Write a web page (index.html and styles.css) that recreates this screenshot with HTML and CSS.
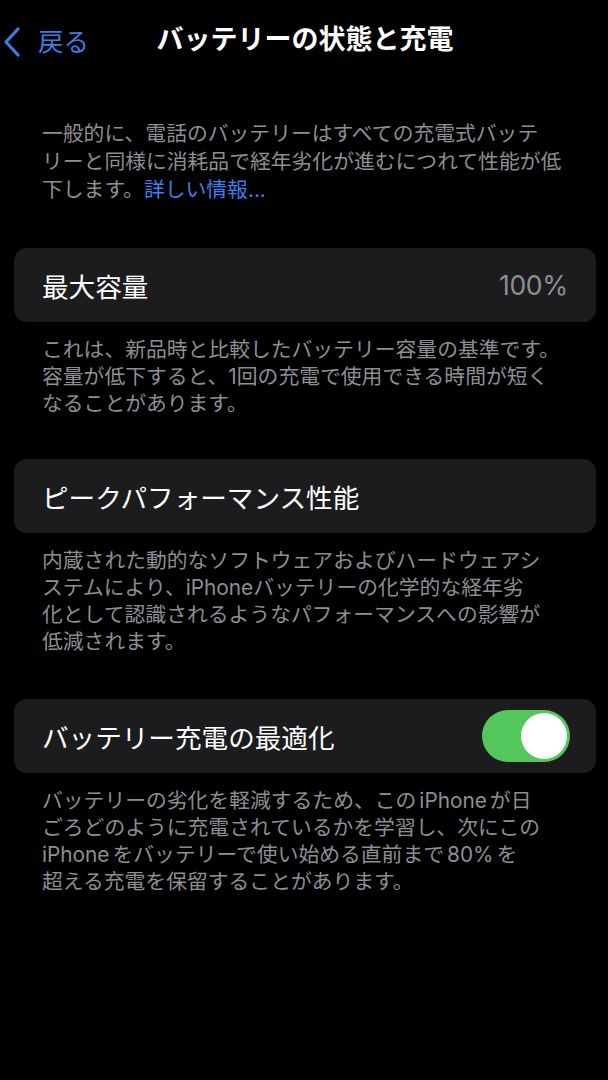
FILE: index.html
```html
<!DOCTYPE html>
<html lang="ja">
<head>
<meta charset="utf-8">
<link rel="stylesheet" href="styles.css">
</head>
<body>
<div class="screen">
  <header class="nav">
    <a class="back">
      <svg class="chev" width="18" height="30" viewBox="0 0 18 30"><path d="M15 2 L3 15 L15 28" fill="none" stroke="#3f7de0" stroke-width="3.2" stroke-linecap="round" stroke-linejoin="round"/></svg>
      <span class="back-label">戻る</span>
    </a>
    <h1 class="title">バッテリーの状態と充電</h1>
  </header>

  <p class="intro">一般的に、電話のバッテリーはすべての充電式バッテ<br>リーと同様に消耗品で経年劣化が進むにつれて性能が低<br>下します。<span class="link">詳しい情報...</span></p>

  <section class="group g1">
    <div class="card">
      <span class="label">最大容量</span>
      <span class="value">100%</span>
    </div>
    <p class="foot">これは、新品時と比較したバッテリー容量の基準です。<br>容量が低下すると、1回の充電で使用できる時間が短く<br>なることがあります。</p>
  </section>

  <section class="group g2">
    <div class="card">
      <span class="label">ピークパフォーマンス性能</span>
    </div>
    <p class="foot">内蔵された動的なソフトウェアおよびハードウェアシ<br>ステムにより、iPhoneバッテリーの化学的な経年劣<br>化として認識されるようなパフォーマンスへの影響が<br>低減されます。</p>
  </section>

  <section class="group g3">
    <div class="card">
      <span class="label">バッテリー充電の最適化</span>
      <span class="toggle"><span class="knob"></span></span>
    </div>
    <p class="foot">バッテリーの劣化を軽減するため、この<span class="lat">iPhone</span>が日<br>ごろどのように充電されているかを学習し、次にこの<br><span class="lat first">iPhone</span>をバッテリーで使い始める直前まで<span class="lat">80%</span>を<br>超える充電を保留することがあります。</p>
  </section>
</div>
</body>
</html>
```

FILE: styles.css
```css
* { box-sizing: border-box; }
html, body { margin: 0; padding: 0; background: #000; }
body {
  font-family: "Inter", "Noto Sans CJK JP", sans-serif;
  color: #fff;
  width: 608px;
  height: 1080px;
  overflow: hidden;
}
.nav {
  position: relative;
  height: 84px;
  display: flex;
  align-items: center;
  justify-content: center;
  padding-bottom: 2px;
}
.back {
  position: absolute;
  left: 3px;
  top: 27px;
  display: flex;
  align-items: center;
  gap: 17px;
  color: #3f7de0;
}
.back-label { font-size: 25.5px; line-height: 30px; }
.title {
  margin: -2px 0 0 2px;
  font-size: 27px;
  font-weight: 600;
  line-height: 30px;
}
.intro {
  margin: 36px 0 0;
  padding: 0 20px 0 42px;
  font-size: 20.8px;
  line-height: 28px;
  color: #8e8e93;
}
.link { color: #3e7fe8; }
.group { margin-top: 44px; }
.g2 { margin-top: 42px; }
.g3 { margin-top: 44px; }
.card {
  margin: 0 12px 0 14px;
  height: 74px;
  background: #1c1c1e;
  border-radius: 13px;
  display: flex;
  align-items: center;
  justify-content: space-between;
  padding: 0 28px 0 28px;
}
.label { font-size: 26.6px; color: #fff; }
.value { font-size: 26.5px; color: #8e8e93; letter-spacing: -0.3px; }
.toggle {
  width: 88px;
  height: 52px;
  border-radius: 26px;
  background: #53c75c;
  position: relative;
  margin-right: -2px;
}
.knob {
  position: absolute;
  right: 3px;
  top: 3px;
  width: 46px;
  height: 46px;
  border-radius: 50%;
  background: #fff;
}
.foot {
  margin: 14px 0 0;
  padding: 0 20px 0 42px;
  font-size: 20.8px;
  line-height: 27px;
  color: #8e8e93;
}
.lat { margin: 0 3px; }
.lat.first { margin-left: 0; }
```
